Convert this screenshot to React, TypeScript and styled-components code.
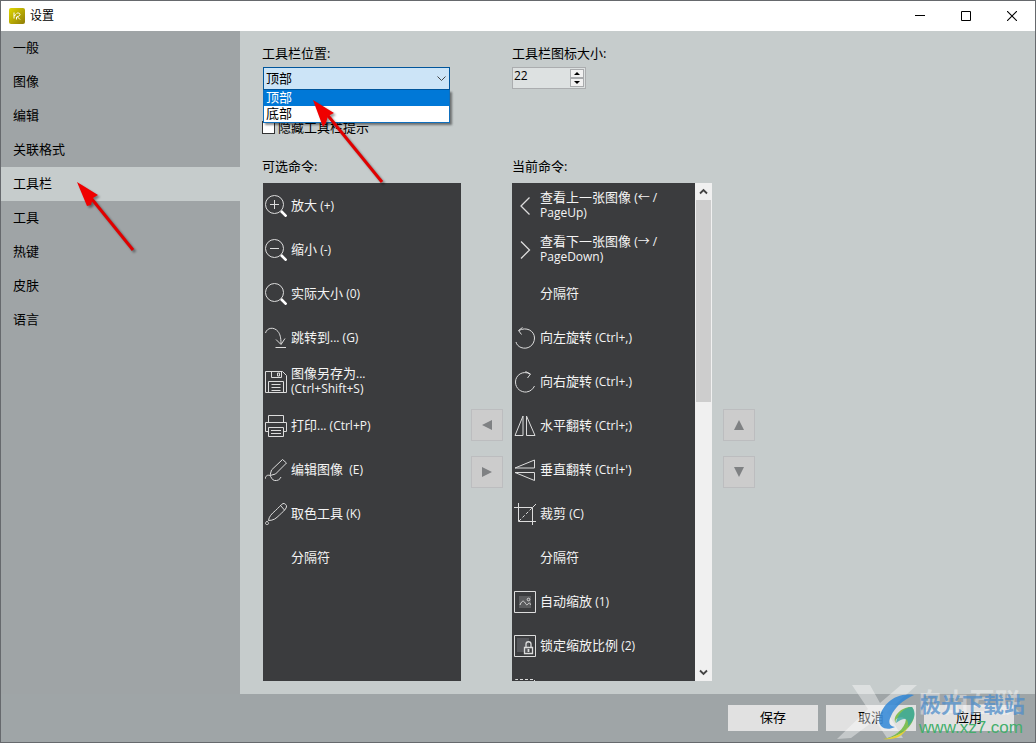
import React, { useState } from 'react';
import styled, { createGlobalStyle } from 'styled-components';

const GlobalStyle = createGlobalStyle`
  *, *::before, *::after { box-sizing: border-box; }
  body {
    margin: 0;
    font-family: "Open Sans", "Noto Sans CJK SC", sans-serif;
    font-size: 13px;
    line-height: 18px;
    color: #000;
  }
  button, input, select { font: inherit; color: inherit; }
`;

const Window = styled.div`
  position: relative;
  height: 100vh;
  display: flex;
  flex-direction: column;
  border: 1px solid #66696d;
  background: #c6cccc;
  overflow: hidden;
`;

const TitleBar = styled.header`
  display: flex;
  align-items: center;
  flex: none;
  height: 30px;
  padding-left: 8px;
  background: #fff;
`;

const Title = styled.h1`
  flex: 1;
  margin: 0 0 0 5px;
  font-size: 12px;
  font-weight: 400;
`;

const CaptionButton = styled.button`
  display: grid;
  place-items: center;
  width: 46px;
  height: 30px;
  padding: 0;
  border: 0;
  background: none;
`;

const Body = styled.div`
  flex: 1;
  min-height: 0;
  display: flex;
`;

const Sidebar = styled.nav`
  flex: none;
  width: 239px;
  background: #9fa4a6;
`;

const SidebarItem = styled.button<{ $active: boolean }>`
  display: block;
  width: 100%;
  height: 34px;
  padding: 0 12px 2px;
  border: 0;
  text-align: left;
  background: ${(p) => (p.$active ? '#c6cccc' : 'transparent')};
`;

const Panel = styled.main`
  flex: 1;
  min-width: 0;
  display: flex;
  flex-direction: column;
  padding: 13px 22px;
`;

const Columns = styled.div`
  display: grid;
  grid-template-columns: 199px 51px 200px 52px;
`;

const Options = styled(Columns)`
  height: 113px;
`;

const Commands = styled(Columns)`
  flex: 1;
  min-height: 0;
  grid-template-rows: 18px minmax(0, 1fr);
  row-gap: 8px;
`;

const Field = styled.div<{ $column: number }>`
  grid-column: ${(p) => p.$column};
`;

const Label = styled.label`
  display: block;
  margin-bottom: 5px;
`;

const ListTitle = styled.h2<{ $column: number }>`
  grid-column: ${(p) => p.$column};
  margin: 0;
  font-size: 13px;
  font-weight: 400;
`;

const Combo = styled.div`
  position: relative;
  width: 187px;
  margin-left: 1px;
`;

const ComboSelect = styled.select`
  appearance: none;
  display: block;
  width: 100%;
  height: 23px;
  padding: 0 2px 2px;
  border: 1px solid #00559b;
  border-radius: 0;
  background: #cce4f7;
  outline: none;
`;

const ComboArrow = styled.svg`
  position: absolute;
  top: 8px;
  right: 4px;
  pointer-events: none;
`;

const ComboList = styled.ul`
  position: absolute;
  z-index: 2;
  top: 23px;
  left: 0;
  width: 100%;
  margin: 0;
  padding: 0;
  border: 1px solid #0f6fbd;
  border-top: 0;
  background: #fff;
  box-shadow: 2px 2px 2px rgba(0, 0, 0, 0.45);
  list-style: none;
`;

const ComboOption = styled.li<{ $selected: boolean }>`
  height: 16px;
  padding-left: 2px;
  line-height: 14px;
  color: ${(p) => (p.$selected ? '#fff' : '#000')};
  background: ${(p) => (p.$selected ? '#0078d7' : '#fff')};
`;

const CheckRow = styled.label`
  display: flex;
  align-items: center;
  gap: 3px;
  margin-top: 28px;
`;

const CheckBox = styled.input`
  appearance: none;
  width: 13px;
  height: 13px;
  margin: 0;
  border: 1px solid #333;
  background: #fff;
  &:checked { background: #0078d7; }
`;

const Spinner = styled.div`
  display: flex;
  width: 74px;
  height: 22px;
  padding: 1px;
  border: 1px solid #abadaf;
  background: #dde1e1;
`;

const SpinnerInput = styled.input`
  flex: 1;
  min-width: 0;
  padding: 0 0 4px;
  border: 0;
  font-size: 12px;
  background: none;
  outline: none;
`;

const SpinnerButtons = styled.div`
  display: grid;
  grid-template-rows: 1fr 1fr;
  width: 14px;
`;

const SpinnerButton = styled.button`
  display: grid;
  place-items: center;
  padding: 0;
  border: 1px solid #a9abad;
  background: #f1f1f1;
`;

const CommandList = styled.ul`
  flex: 1;
  min-width: 0;
  height: 100%;
  margin: 0;
  padding: 0;
  overflow: hidden;
  background: #3b3c3e;
  color: #f4f4f4;
  list-style: none;
`;

const ListBox = styled.div<{ $column: number; $inset?: boolean }>`
  grid-column: ${(p) => p.$column};
  display: flex;
  min-height: 0;
  margin-left: ${(p) => (p.$inset ? '1px' : '0')};
`;

const CommandItem = styled.li`
  display: flex;
  align-items: center;
  gap: 4px;
  height: 44px;
  padding-left: 2px;
`;

const CommandIcon = styled.svg`
  flex: none;
  margin-top: 2px;
  fill: none;
  stroke: #dcdcdc;
`;

const CommandText = styled.span`
  line-height: 15px;
  white-space: pre;
`;

const Shortcut = styled.span`
  font-size: 12px;
`;

const ScrollBar = styled.div`
  display: flex;
  flex-direction: column;
  flex: none;
  width: 17px;
  background: #f0f0f0;
`;

const ScrollButton = styled.button`
  display: grid;
  place-items: center;
  flex: none;
  height: 17px;
  padding: 0;
  border: 0;
  background: #f0f0f0;
`;

const ScrollTrack = styled.div`
  flex: 1;
  display: grid;
  grid-template-rows: 10fr 13fr;
  padding: 0 1px;
`;

const ScrollThumb = styled.div`
  background: #cdcdcd;
`;

const MoveButtons = styled.div<{ $column: number }>`
  grid-column: ${(p) => p.$column};
  display: flex;
  flex-direction: column;
  align-items: flex-end;
  justify-content: center;
  gap: 15px;
  padding: 32px 9px 0 0;
`;

const MoveButton = styled.button`
  display: grid;
  place-items: center;
  width: 32px;
  height: 32px;
  padding: 0;
  border: 1px solid #bcbdbf;
  background: #cccccc;
`;

const Footer = styled.footer`
  flex: none;
  display: flex;
  justify-content: flex-end;
  gap: 8px;
  height: 48px;
  padding: 11px 21px 0 0;
  background: #9fa5a7;
`;

const FooterButton = styled.button`
  width: 90px;
  height: 26px;
  padding: 0 0 2px;
  border: 0;
  background: #e1e1e1;
`;

const Arrow = styled.svg`
  position: absolute;
  z-index: 3;
  overflow: visible;
  pointer-events: none;
  filter: drop-shadow(2px 2px 1px rgba(0, 0, 0, 0.4));
`;

const SidebarArrow = styled(Arrow)`
  top: 178px;
  left: 74px;
`;

const ComboPointer = styled(Arrow)`
  top: 33px;
  left: 50px;
`;

const Watermark = styled.div`
  position: absolute;
  z-index: 4;
  right: 6px;
  bottom: 2px;
  width: 200px;
  height: 56px;
  pointer-events: none;
`;

const WatermarkArt = styled.svg`
  position: absolute;
  inset: 0;
`;

const WatermarkBack = styled.span`
  position: absolute;
  top: 0;
  right: 8px;
  font-size: 26px;
  font-weight: 700;
  line-height: 36px;
  color: rgba(255, 255, 255, 0.38);
`;

const WatermarkName = styled.span`
  position: absolute;
  top: 5px;
  right: 4px;
  font-size: 21px;
  font-weight: 700;
  line-height: 30px;
  color: rgba(80, 142, 202, 0.75);
`;

const WatermarkSite = styled.span`
  position: absolute;
  top: 34px;
  right: 6px;
  font-family: "Liberation Sans", sans-serif;
  font-size: 17px;
  line-height: 20px;
  color: #43ae6b;
`;

const handle = <path d="M16 16l5.500 5.500" stroke="#fff" strokeWidth="2.600" />;

const icons: Record<string, React.ReactNode> = {
  zoomIn: (
    <>
      <circle cx="9.5" cy="9.5" r="9" />
      <path d="M5 9.5h9M9.5 5v9" />
      {handle}
    </>
  ),
  zoomOut: (
    <>
      <circle cx="9.5" cy="9.5" r="9" />
      <path d="M5 9.500h9" />
      {handle}
    </>
  ),
  actual: (
    <>
      <circle cx="9.5" cy="9.5" r="9" />
      {handle}
    </>
  ),
  jump: <path d="M.5 6C2 .5 9-.5 13 4.500c2 2.500 3 6 3 12.500M11 12.500l5 5 4-6M10.500 20.500H21" />,
  save: <path d="M.5.500h17l4 4v17H.5zM6.500.500v6h10v-6M12.500 2v3h2V2zM3.500 21.500v-11h15v11M6.500 13.500h9M6.500 16.500h9M6.500 19.500h9" />,
  print: <path d="M3.500 7.500v-7h15v7M3.500 16.500h-3v-9h21v9h-3M3.500 12.500h15v9h-15zM6 15.500h10M6 18.500h10" />,
  edit: <path d="M5 16.500L6.500 11 17.500.500l4 3.500-11 11zM0 20c.5-3 2.500-4.500 4.500-3.500s2 4.500 5 5 5.500-1 6.500-3.500" />,
  picker: <path d="M3.500 17.500c.5-4 3-6.500 7-10 3-2.500 5-5.500 7.500-7 1.500-.5 4 1.500 3.500 3.500-1 3-4 5-7 8-3.500 3.500-6 5.500-11 5.500zM15.500 2.500l4 4.500M2 18c-2 2-2 3.500 0 3.500s2-1.500 0-3.500z" />,
  prev: <path d="M15.500 2.500L7 11l8.500 8.500" strokeWidth="1.300" />,
  next: <path d="M7 2.500l8.500 8.500L7 19.500" strokeWidth="1.300" />,
  rotateLeft: <path d="M5 3.500C12-.5 20.500 3.500 20.500 11S13.500 23 7 20.500C4.500 19.500 2.500 17.500 2 15M8.500.500l-4 3 3 4" />,
  rotateRight: <path d="M16 3C9-1 1.500 4 1.500 11s6 10.500 11 10c4-.5 6.500-3 8-6M11.500.500l5 2.500-3 4" />,
  flipH: <path d="M9 1L1 20.500h8zM12.500 1v19.500H21z" />,
  flipV: <path d="M20.500 1v8H1zM20.500 21.500v-8H1z" />,
  crop: (
    <>
      <path d="M4.500 0v18.500H22M0 4.500h18.500V22M18.500 4.500L22 1" />
      <path d="M5 18L18 5" strokeDasharray="3 2" />
    </>
  ),
  autoZoom: (
    <>
      <path d="M5 5h12v12H5z" fill="#5a5b5d" stroke="none" />
      <path d="M.5.500h21v21H.5z" />
      <path d="M6 14c1-3 3-5 4.500-3s2 4 3.500 2 2-1 2.500 1" />
      <circle cx="14.500" cy="8.500" r="1.300" />
    </>
  ),
  lockZoom: (
    <>
      <path d="M3 3h12v14H3z" fill="#55565a" stroke="none" />
      <path d="M.5.500h21v21H.5z" />
      <path d="M10.500 12.500h8v6h-8zM12 12.500V9c0-3 5-3 5 0v3.500" strokeWidth="1.300" />
      <path d="M14.500 14v3" strokeWidth="1.800" />
    </>
  ),
  fit: <path d="M1.500 21V.500h19V21" strokeDasharray="3 2" />,
};

interface Command {
  icon?: string;
  text: string;
  keys?: string;
}

const available: Command[] = [
  { icon: 'zoomIn', text: '放大', keys: ' (+)' },
  { icon: 'zoomOut', text: '缩小', keys: ' (-)' },
  { icon: 'actual', text: '实际大小', keys: ' (0)' },
  { icon: 'jump', text: '跳转到', keys: '... (G)' },
  { icon: 'save', text: '图像另存为', keys: '...\n(Ctrl+Shift+S)' },
  { icon: 'print', text: '打印', keys: '... (Ctrl+P)' },
  { icon: 'edit', text: '编辑图像', keys: '  (E)' },
  { icon: 'picker', text: '取色工具', keys: ' (K)' },
  { text: '分隔符' },
];

const current: Command[] = [
  { icon: 'prev', text: '查看上一张图像', keys: ' (← /\nPageUp)' },
  { icon: 'next', text: '查看下一张图像', keys: ' (→ /\nPageDown)' },
  { text: '分隔符' },
  { icon: 'rotateLeft', text: '向左旋转', keys: ' (Ctrl+,)' },
  { icon: 'rotateRight', text: '向右旋转', keys: ' (Ctrl+.)' },
  { icon: 'flipH', text: '水平翻转', keys: ' (Ctrl+;)' },
  { icon: 'flipV', text: '垂直翻转', keys: " (Ctrl+')" },
  { icon: 'crop', text: '裁剪', keys: ' (C)' },
  { text: '分隔符' },
  { icon: 'autoZoom', text: '自动缩放', keys: ' (1)' },
  { icon: 'lockZoom', text: '锁定缩放比例', keys: ' (2)' },
  { icon: 'fit', text: '' },
];

const sections = ['一般', '图像', '编辑', '关联格式', '工具栏', '工具', '热键', '皮肤', '语言'];
const positions = ['顶部', '底部'];

function CommandRows({ commands }: { commands: Command[] }) {
  return (
    <CommandList>
      {commands.map((c, i) => (
        <CommandItem key={i}>
          <CommandIcon width="22" height="22" viewBox="0 0 22 22" aria-hidden="true">
            {c.icon && icons[c.icon]}
          </CommandIcon>
          <CommandText>
            {c.text}
            {c.keys && <Shortcut>{c.keys}</Shortcut>}
          </CommandText>
        </CommandItem>
      ))}
    </CommandList>
  );
}

const triangles = {
  left: 'M10 0v10L0 5z',
  right: 'M0 0v10l10-5z',
  up: 'M5 0l5 10H0z',
  down: 'M0 0h10L5 10z',
};

function Triangle({ dir, width = 10, height = 10, color = '#7f8183' }: {
  dir: keyof typeof triangles; width?: number; height?: number; color?: string;
}) {
  return (
    <svg width={width} height={height} viewBox="0 0 10 10" preserveAspectRatio="none" aria-hidden="true">
      <path d={triangles[dir]} fill={color} />
    </svg>
  );
}

export default function App() {
  const [section, setSection] = useState('工具栏');
  const [position, setPosition] = useState('顶部');
  const [size, setSize] = useState(22);

  return (
    <Window>
      <GlobalStyle />
      <TitleBar>
        <svg width="16" height="16" viewBox="0 0 16 16" aria-hidden="true">
          <defs>
            <linearGradient id="logo" x1="0" y1="0" x2="1" y2="1">
              <stop offset="0" stopColor="#e0d800" />
              <stop offset="1" stopColor="#8f7c08" />
            </linearGradient>
          </defs>
          <rect width="16" height="16" rx="2" fill="url(#logo)" />
          <path d="M5 4.500v6M5 8l2-1.500M7.500 5.500c1-1 3.500-.5 3.500 1S9 8.500 8 8.500M8 8.500L11 11.500M7.500 9v2.500" fill="none" stroke="#fff" />
        </svg>
        <Title>设置</Title>
        <CaptionButton aria-label="最小化">
          <svg width="10" height="10"><path d="M0 4.500h10" stroke="#000" /></svg>
        </CaptionButton>
        <CaptionButton aria-label="最大化">
          <svg width="10" height="10"><path d="M.5.500h9v9h-9z" fill="none" stroke="#000" /></svg>
        </CaptionButton>
        <CaptionButton aria-label="关闭">
          <svg width="10" height="10"><path d="M0 0l10 10M10 0L0 10" stroke="#000" strokeWidth="1.100" /></svg>
        </CaptionButton>
      </TitleBar>

      <Body>
        <Sidebar>
          {sections.map((s) => (
            <SidebarItem key={s} $active={s === section} onClick={() => setSection(s)}>{s}</SidebarItem>
          ))}
        </Sidebar>

        <Panel>
          <Options>
            <Field $column={1}>
              <Label htmlFor="position">工具栏位置:</Label>
              <Combo>
                <ComboSelect id="position" value={position} onChange={(e) => setPosition(e.target.value)}>
                  {positions.map((p) => <option key={p}>{p}</option>)}
                </ComboSelect>
                <ComboArrow width="9" height="7" viewBox="0 0 9 7">
                  <path d="M.5 1.500l4 4 4-4" fill="none" stroke="#444" />
                </ComboArrow>
                <ComboList>
                  {positions.map((p) => (
                    <ComboOption key={p} $selected={p === position} onClick={() => setPosition(p)}>{p}</ComboOption>
                  ))}
                </ComboList>
                <ComboPointer width="72" height="84" viewBox="0 0 72 84" aria-hidden="true">
                  <path d="M12 12L69 82" stroke="#e00000" strokeWidth="3" />
                  <path d="M0 0L21 13 15 16 13 23 10 27z" fill="#f00000" />
                </ComboPointer>
              </Combo>
              <CheckRow>
                <CheckBox type="checkbox" />
                隐藏工具栏提示
              </CheckRow>
            </Field>
            <Field $column={3}>
              <Label htmlFor="size">工具栏图标大小:</Label>
              <Spinner>
                <SpinnerInput id="size" value={size} onChange={(e) => setSize(Number(e.target.value) || 0)} />
                <SpinnerButtons>
                  <SpinnerButton aria-label="增大" onClick={() => setSize(size + 1)}>
                    <Triangle dir="up" width={6} height={3} color="#000" />
                  </SpinnerButton>
                  <SpinnerButton aria-label="减小" onClick={() => setSize(size - 1)}>
                    <Triangle dir="down" width={6} height={3} color="#000" />
                  </SpinnerButton>
                </SpinnerButtons>
              </Spinner>
            </Field>
          </Options>

          <Commands>
            <ListTitle $column={1}>可选命令:</ListTitle>
            <ListTitle $column={3}>当前命令:</ListTitle>
            <ListBox $column={1} $inset>
              <CommandRows commands={available} />
            </ListBox>
            <MoveButtons $column={2}>
              <MoveButton aria-label="移除"><Triangle dir="left" /></MoveButton>
              <MoveButton aria-label="添加"><Triangle dir="right" /></MoveButton>
            </MoveButtons>
            <ListBox $column={3}>
              <CommandRows commands={current} />
              <ScrollBar>
                <ScrollButton aria-label="向上滚动">
                  <svg width="9" height="7"><path d="M1 5.500L4.500 2 8 5.500" fill="none" stroke="#444" strokeWidth="1.800" /></svg>
                </ScrollButton>
                <ScrollTrack><ScrollThumb /></ScrollTrack>
                <ScrollButton aria-label="向下滚动">
                  <svg width="9" height="7"><path d="M1 1.500L4.500 5 8 1.500" fill="none" stroke="#444" strokeWidth="1.800" /></svg>
                </ScrollButton>
              </ScrollBar>
            </ListBox>
            <MoveButtons $column={4}>
              <MoveButton aria-label="上移"><Triangle dir="up" /></MoveButton>
              <MoveButton aria-label="下移"><Triangle dir="down" /></MoveButton>
            </MoveButtons>
          </Commands>
        </Panel>
      </Body>

      <Footer>
        <FooterButton>保存</FooterButton>
        <FooterButton>取消</FooterButton>
        <FooterButton>应用</FooterButton>
      </Footer>

      <SidebarArrow width="60" height="74" viewBox="0 0 60 74" aria-hidden="true">
        <path d="M12 14L58 71" stroke="#e00000" strokeWidth="3" />
        <path d="M2 3L23 16 18 19 16 26 12 27z" fill="#f00000" />
      </SidebarArrow>

      <Watermark>
        <WatermarkArt width="200" height="56" viewBox="0 0 200 56" aria-hidden="true">
          <path d="M23 1h18l10 18L72 1h16L58 28l16 26H58L46 36 22 54l-14 1 31-30z" fill="#fff" fillOpacity=".4" />
          <path d="M85 11C65 8 52 22 50 36c0 8 8 11 16 7-6-1-7-5-4-11 4-9 12-16 23-21z" fill="#2f86d6" fillOpacity=".85" />
          <path d="M83 23c8 12-6 30-29 32 12-2 22-10 23-20-6-4-12 0-10 4-5-6 6-17 16-16z" fill="#6fb83c" fillOpacity=".85" />
          <path d="M83 23c5 6 2 14-4 19 1-7-3-10-12-3 1-9 9-16 16-16z" fill="#3aa8a0" fillOpacity=".8" />
          <path d="M54 55c10-1 20-5 25-12-5 10-14 13-25 12z" fill="#e6d233" />
        </WatermarkArt>
        <WatermarkBack>自由互联</WatermarkBack>
        <WatermarkName>极光下载站</WatermarkName>
        <WatermarkSite>www.xz7.com</WatermarkSite>
      </Watermark>
    </Window>
  );
}
